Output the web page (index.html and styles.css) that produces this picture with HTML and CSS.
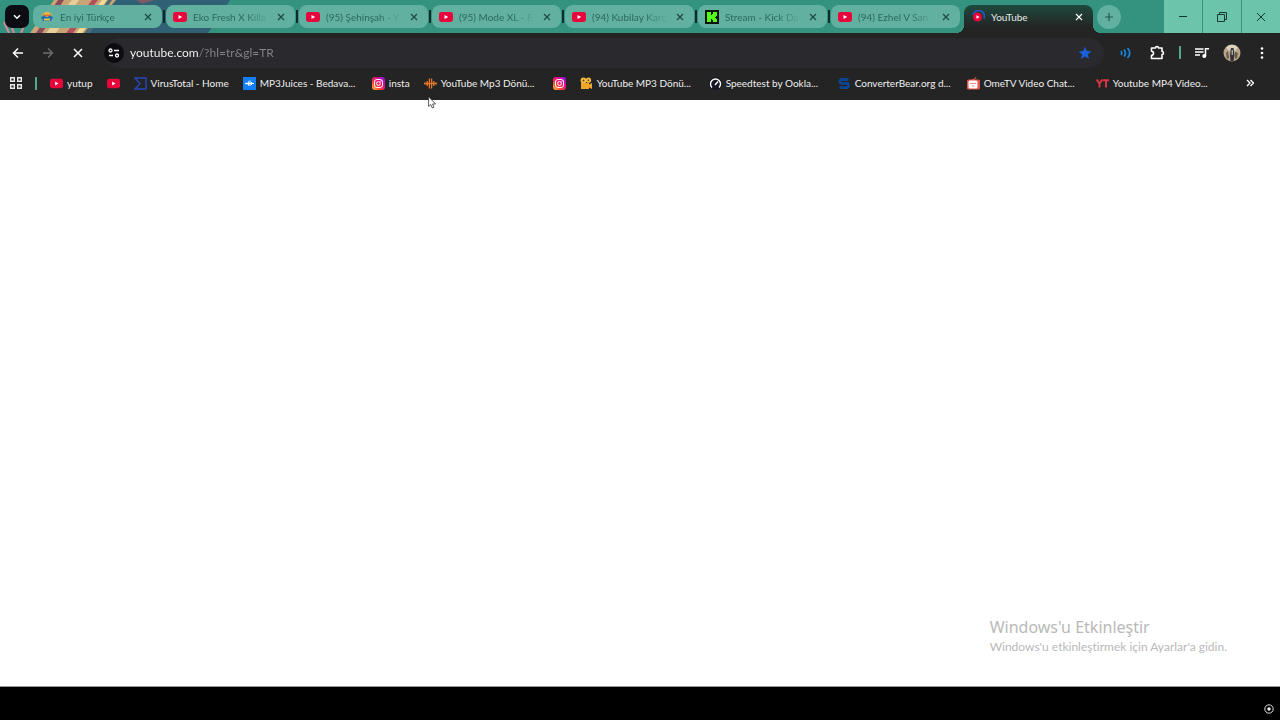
FILE: index.html
```
<!DOCTYPE html>
<html lang="tr">
<head>
    <meta charset="UTF-8">
    <meta name="viewport" content="width=device-width, initial-scale=1.0">
    <title>YouTube</title>
    <link rel="stylesheet" href="styles.css">
</head>
<body>
    <!-- Shared icons -->
    <svg class="sprite" aria-hidden="true">
        <symbol id="yt" viewBox="0 0 14 10">
            <rect width="14" height="10" rx="2.4" fill="#e8053c"/>
            <path d="M5.5 2.9v4.2L9.2 5z" fill="#fff"/>
        </symbol>
        <symbol id="close" viewBox="0 0 8 8">
            <path d="M1 1l6 6M7 1L1 7" fill="none" stroke="currentColor" stroke-width="1.2"/>
        </symbol>
        <symbol id="insta" viewBox="0 0 13 13">
            <rect width="13" height="13" rx="3" fill="url(#insta-fill)"/>
            <rect x="2.5" y="2.5" width="8" height="8" rx="2.4" fill="none" stroke="#fff"/>
            <circle cx="6.5" cy="6.5" r="1.9" fill="none" stroke="#fff"/>
            <circle cx="8.9" cy="4.1" r=".6" fill="#fff"/>
        </symbol>
        <defs>
            <linearGradient id="insta-fill" x1="0" y1="1" x2="1" y2="0">
                <stop offset="0" stop-color="#ffc42e"/>
                <stop offset=".35" stop-color="#fb3c3c"/>
                <stop offset=".65" stop-color="#e6078e"/>
                <stop offset="1" stop-color="#7a1cf0"/>
            </linearGradient>
        </defs>
    </svg>

    <!-- Tab strip -->
    <header class="tab-strip">
        <svg class="theme-art" width="300" height="33" viewBox="0 0 300 33" aria-hidden="true">
            <path d="M80 33L112 0H230L208 33z" fill="#2f6074"/>
            <path d="M30 33L54 0H116L88 33z" fill="#c9a476"/>
            <path d="M46 33L72 0h7L56 33z" fill="#e8cf9a"/>
            <path d="M36 33L58 0h6L42 33z" fill="#8f4a58"/>
            <path d="M66 33L92 0h6L73 33z" fill="#b4505c"/>
            <path d="M84 33L108 0h4L90 33z" fill="#4d6c78"/>
            <path d="M76 33L102 0h5L82 33z" fill="#f0dc96"/>
            <path d="M4 22l5 11M11 26l3 7M24 26l-3 7" stroke="#d68a98" stroke-width="2"/>
            <path d="M136 0h18l-12 4z" fill="#7a5c66"/>
        </svg>
        <button class="tab-search" aria-label="Sekmelerde ara">
            <svg width="8" height="6" viewBox="0 0 8 6"><path d="M1 1.2l3 3 3-3" fill="none" stroke="#fff" stroke-width="1.6"/></svg>
        </button>
        <nav class="tabs" aria-label="Sekmeler">
            <div class="tab">
                <button class="tab-link">
                    <svg class="icon" viewBox="0 0 14 14">
                        <path d="M2 7a5 5 0 0 1 10 0z" fill="#f0b63c"/>
                        <path d="M3 5.2h8" stroke="#d9503c"/>
                        <path d="M1 7l3-1.500 3 1.500 3-1.500L13 7l-2 4H3z" fill="#1f6fb0"/>
                        <path d="M4 8.500h6v2H4z" fill="#e3c14a"/>
                    </svg>
                    <span class="title">En iyi Türkçe</span>
                </button>
                <button class="close" aria-label="Kapat"><svg><use href="#close"/></svg></button>
            </div>
            <div class="tab">
                <button class="tab-link"><svg class="icon"><use href="#yt"/></svg><span class="title">Eko Fresh X Killa</span></button>
                <button class="close" aria-label="Kapat"><svg><use href="#close"/></svg></button>
            </div>
            <div class="tab">
                <button class="tab-link"><svg class="icon"><use href="#yt"/></svg><span class="title">(95) Şehinşah - Y</span></button>
                <button class="close" aria-label="Kapat"><svg><use href="#close"/></svg></button>
            </div>
            <div class="tab">
                <button class="tab-link"><svg class="icon"><use href="#yt"/></svg><span class="title">(95) Mode XL - F</span></button>
                <button class="close" aria-label="Kapat"><svg><use href="#close"/></svg></button>
            </div>
            <div class="tab">
                <button class="tab-link"><svg class="icon"><use href="#yt"/></svg><span class="title">(94) Kubilay Karç</span></button>
                <button class="close" aria-label="Kapat"><svg><use href="#close"/></svg></button>
            </div>
            <div class="tab">
                <button class="tab-link">
                    <svg class="icon" viewBox="0 0 14 14">
                        <rect width="14" height="14" fill="#0a140a"/>
                        <path d="M2 2h4v3h1V4h1V2h4v4h-1v1h-1v1h1v1h1v3H8v-2H7V9H6v3H2z" fill="#53fc18"/>
                    </svg>
                    <span class="title">Stream - Kick Da</span>
                </button>
                <button class="close" aria-label="Kapat"><svg><use href="#close"/></svg></button>
            </div>
            <div class="tab last">
                <button class="tab-link"><svg class="icon"><use href="#yt"/></svg><span class="title">(94) Ezhel V San</span></button>
                <button class="close" aria-label="Kapat"><svg><use href="#close"/></svg></button>
            </div>
            <div class="tab active">
                <button class="tab-link">
                    <svg class="icon" viewBox="0 0 14 14">
                        <path d="M4 1.500a6 6 0 0 1 9 7" fill="none" stroke="#2257c8" stroke-width="1.6"/>
                        <path d="M1.500 5a6 6 0 0 1 4-3.800" fill="none" stroke="#2257c8" stroke-width="1.6"/>
                        <circle cx="6.500" cy="7" r="4.500" fill="#e8053c"/>
                        <path d="M5.500 5.200v3.600L8.500 7z" fill="#fff"/>
                    </svg>
                    <span class="title">YouTube</span>
                </button>
                <button class="close" aria-label="Kapat"><svg><use href="#close"/></svg></button>
            </div>
        </nav>
        <button class="new-tab" aria-label="Yeni sekme">
            <svg width="10" height="10" viewBox="0 0 10 10"><path d="M5 1v8M1 5h8" stroke="#1e5a4c" stroke-width="1.2"/></svg>
        </button>
        <div class="window-controls">
            <button aria-label="Simge durumuna küçült"><svg width="10" height="10" viewBox="0 0 10 10"><path d="M1 4.500h8" stroke="#143a30"/></svg></button>
            <button aria-label="Önceki boyut"><svg width="10" height="10" viewBox="0 0 10 10"><path d="M.5 2.500h7v7h-7zM2.500 2.500v-2h7v7h-2" fill="none" stroke="#143a30"/></svg></button>
            <button aria-label="Pencereyi kapat"><svg width="10" height="10" viewBox="0 0 10 10"><path d="M1 1l8 8M9 1L1 9" stroke="#143a30"/></svg></button>
        </div>
    </header>

    <!-- Toolbar -->
    <div class="toolbar">
        <button class="tool" aria-label="Geri"><svg width="12" height="12" viewBox="0 0 12 12"><path d="M11 6H2M6 1.500L1.500 6 6 10.500" fill="none" stroke="#fff" stroke-width="1.5"/></svg></button>
        <button class="tool" aria-label="İleri" disabled><svg width="12" height="12" viewBox="0 0 12 12"><path d="M1 6h9M6 1.500L10.500 6 6 10.500" fill="none" stroke="#707070" stroke-width="1.3"/></svg></button>
        <button class="tool" aria-label="Durdur"><svg width="10" height="10" viewBox="0 0 10 10"><path d="M1 1l8 8M9 1L1 9" stroke="#fff" stroke-width="1.5"/></svg></button>
        <div class="omnibox">
            <button class="site-info" aria-label="Site bilgileri">
                <svg width="12" height="10" viewBox="0 0 12 10" fill="none" stroke="#fff" stroke-width="1.3"><circle cx="2.500" cy="2.500" r="1.500"/><path d="M6 2.500h5M1 7.500h4"/><circle cx="9" cy="7.500" r="1.500"/></svg>
            </button>
            <input class="address" type="text" aria-label="Adres" value="youtube.com/?hl=tr&amp;gl=TR">
            <button class="star" aria-label="Yer işareti">
                <svg width="14" height="14" viewBox="0 0 14 14"><path d="M7 .8l1.800 4.200 4.600.4-3.500 3 1.100 4.500L7 10.500 3 12.900l1.100-4.500-3.500-3L5.200 5z" fill="#1a5fd8"/></svg>
            </button>
        </div>
        <div class="actions">
            <button class="sound" aria-label="Ses uzantısı"><svg width="12" height="12" viewBox="0 0 12 12" fill="none" stroke="#1787e0" stroke-width="1.700"><path d="M1 4q1.500 2 0 4M4 2.500q3 3.500 0 7M7.500 1q4.500 5 0 10"/></svg></button>
            <button aria-label="Uzantılar"><svg width="15" height="15" viewBox="0 0 15 15"><path d="M1.500 3h4a1.500 1.500 0 0 1 3 0h3.500v3.500a1.500 1.500 0 0 1 0 3V13.500H1.500v-3.300a2 2 0 0 0 0-4z" fill="none" stroke="#fff" stroke-width="1.6" stroke-linejoin="round"/></svg></button>
            <span class="divider"></span>
            <button aria-label="Medya denetimi"><svg width="14" height="12" viewBox="0 0 14 12"><path d="M0 2h8.500M0 5h8.500M0 8h5M10.500 9V1.800H14" fill="none" stroke="#fff" stroke-width="1.5"/><circle cx="9.300" cy="9" r="2" fill="#fff"/></svg></button>
            <button aria-label="Profil">
                <svg width="18" height="18" viewBox="0 0 18 18">
                    <circle cx="9" cy="9" r="8.500" fill="#b8a68a"/>
                    <path d="M3 3.500Q9-2 15 3.500L12 7 9 4 6 7z" fill="#ddd3bd"/>
                    <path d="M8 4h2.500l1 7-1 6H7.500L7 11z" fill="#30343a"/>
                    <path d="M3 9l2-2 1 7-2 1zM12 8l3 1-1 5-2 1z" fill="#6a5a48"/>
                    <path d="M8.700 6h1v5h-1z" fill="#d8dce0"/>
                </svg>
            </button>
            <button class="menu" aria-label="Menü"><svg width="4" height="12" viewBox="0 0 4 12" fill="#fff"><circle cx="2" cy="1.500" r="1.300"/><circle cx="2" cy="6" r="1.300"/><circle cx="2" cy="10.500" r="1.300"/></svg></button>
        </div>
    </div>

    <!-- Bookmarks -->
    <nav class="bookmarks" aria-label="Yer işaretleri">
        <button class="apps" aria-label="Uygulamalar"><svg width="12" height="12" viewBox="0 0 12 12" fill="none" stroke="#e8e8e8" stroke-width="1.4"><path d="M.7.7h3.600v3.600H.7zM7.700.7h3.600v3.600H7.700zM.7 7.700h3.600v3.600H.7zM7.700 7.700h3.600v3.600H7.700z"/></svg></button>
        <span class="divider"></span>
        <a href="#"><svg class="icon"><use href="#yt"/></svg><span>yutup</span></a>
        <a href="#" aria-label="YouTube"><svg class="icon"><use href="#yt"/></svg></a>
        <a href="#"><svg class="icon" viewBox="0 0 13 13"><path d="M1 1h11v11H1l5-5.500z" fill="none" stroke="#2447b8" stroke-width="1.5"/></svg><span>VirusTotal - Home</span></a>
        <a href="#"><svg class="icon" viewBox="0 0 13 13"><rect width="13" height="13" fill="#1580f5"/><path d="M2 6.500h9M4 5.500v2M5.500 4.500v4M7 3.500v5.500M8.500 5v3" stroke="#fff"/></svg><span class="long">MP3Juices - Bedava...</span></a>
        <a href="#"><svg class="icon"><use href="#insta"/></svg><span>insta</span></a>
        <a href="#"><svg class="icon" viewBox="0 0 13 13"><path d="M1 5.500v2M3.200 4v5M5.400 1.500v10M7.600 1.500v10M9.800 4v5M12 5.500v2M0 6.500h13" stroke="#e8792b" stroke-width="1.300"/></svg><span class="long">YouTube Mp3 Dönü...</span></a>
        <a href="#" aria-label="Instagram"><svg class="icon"><use href="#insta"/></svg></a>
        <a href="#"><svg class="icon" viewBox="0 0 13 13"><circle cx="3.500" cy="3.500" r="2.900" fill="#f7bd3c"/><circle cx="8.500" cy="3.200" r="2.600" fill="#f7bd3c"/><path d="M1 6h8v1.500l3-1.500v6l-3-1.500V12H1z" fill="#eda52c"/><circle cx="3.500" cy="3.500" r="1" fill="#6b4310"/><circle cx="8.500" cy="3.200" r=".9" fill="#6b4310"/></svg><span class="long">YouTube MP3 Dönü...</span></a>
        <a href="#"><svg class="icon" viewBox="0 0 13 13"><circle cx="6.500" cy="6.500" r="6.500" fill="#141526"/><path d="M3 10.500a5 5 0 1 1 7 0" fill="none" stroke="#fff" stroke-width="1.400"/><path d="M6 8l3-3.500" stroke="#fff" stroke-width="1.400"/></svg><span class="long">Speedtest by Ookla...</span></a>
        <a href="#"><svg class="icon" viewBox="0 0 13 13"><path d="M10.500 2.500H4Q2 2.500 2 4.300T4 6.300H8.500Q10.500 6.500 10.500 8.500T8.500 10.700H1.500" fill="none" stroke="#0d4591" stroke-width="2.800"/></svg><span class="long">ConverterBear.org d...</span></a>
        <a href="#"><svg class="icon" viewBox="0 0 13 13"><path d="M4.500 3l3-1M7 3l2-3" stroke="#e05546"/><rect y="2.500" width="13" height="10" rx="1.500" fill="#e05546"/><rect x="1.500" y="3.500" width="9" height="8" rx="1.500" fill="#fff"/><path d="M3 6.500h6M5 9h2.500" stroke="#e58a80"/></svg><span class="long">OmeTV Video Chat...</span></a>
        <a href="#"><svg class="icon" viewBox="0 0 13 13"><path d="M.7 2.500L3.500 6.500 6.300 2.500M3.500 6.500v4M7 3.300h6M10 3.300v7.200" fill="none" stroke="#dc3545" stroke-width="1.900"/></svg><span class="long">Youtube MP4 Video...</span></a>
        <button class="more" aria-label="Diğer yer işaretleri"><svg width="8" height="8" viewBox="0 0 8 8"><path d="M1 1l3 3-3 3M4.500 1l3 3-3 3" fill="none" stroke="#fff" stroke-width="1.400"/></svg></button>
    </nav>

    <!-- Page still loading -->
    <main class="page">
        <div class="watermark">
            <p class="watermark-title">Windows'u Etkinleştir</p>
            <p class="watermark-text">Windows'u etkinleştirmek için Ayarlar'a gidin.</p>
        </div>
    </main>

    <footer class="taskbar">
        <svg width="10" height="10" viewBox="0 0 10 10"><circle cx="5" cy="5" r="4.200" fill="none" stroke="#ddd"/><circle cx="5" cy="5" r="1.700" fill="#fff"/></svg>
    </footer>

    <svg class="cursor" width="9" height="13" viewBox="0 0 9 13" aria-hidden="true"><path d="M.6.8v9.700l2.200-2 1.500 3.500 1.700-.8L4.600 8h3z" fill="#fff" stroke="#333" stroke-width=".8"/></svg>
</body>
</html>
```
FILE: styles.css
```
/* Global Styling */
* {
    box-sizing: border-box;
}
body {
    margin: 0;
    min-height: 100vh;
    display: flex;
    flex-direction: column;
    background-color: #fff;
    font-family: Lato, "Noto Sans", sans-serif;
    font-size: 10px;
    line-height: 16px;
    font-variant-ligatures: none;
}
button {
    margin: 0;
    padding: 0;
    border: 0;
    background: none;
    font: inherit;
    color: inherit;
    display: flex;
    align-items: center;
    justify-content: center;
}
svg {
    display: block;
    flex: none;
}
.sprite {
    position: absolute;
    width: 0;
    height: 0;
}
.icon {
    width: 13px;
    height: 13px;
}
.divider {
    width: 2px;
    height: 13px;
    background-color: #52a88e;
}

/* Tab strip */
.tab-strip {
    position: relative;
    display: flex;
    height: 33px;
    padding-left: 5px;
    background-color: #33937f;
}
.theme-art {
    position: absolute;
    left: 0;
    top: 0;
}
.tab-search {
    position: relative;
    flex: none;
    width: 24px;
    height: 23px;
    margin: 5px 4px 0 0;
    border-radius: 7px;
    background-color: #0c0c14;
}
.tabs {
    position: relative;
    display: flex;
    flex: 0 1 1064px;
    min-width: 0;
    padding-top: 5px;
}
.tab {
    position: relative;
    flex: 1 1 0;
    min-width: 0;
    height: 23px;
    margin-right: 4px;
    padding: 0 10px 0 7px;
    display: flex;
    align-items: center;
    border-radius: 8px;
    background-color: #62b09f;
    color: #2b6a5d;
}
.tab::after {
    content: "";
    position: absolute;
    right: -3px;
    top: 5px;
    width: 2px;
    height: 13px;
    background-color: #0e2a2a;
}
.tab.last::after {
    display: none;
}
.tab-link {
    flex: 1;
    min-width: 0;
    justify-content: flex-start;
    gap: 6px;
}
.tab .icon {
    width: 14px;
    height: 14px;
}
.title {
    flex: 1;
    text-align: left;
    white-space: nowrap;
    mask-image: linear-gradient(to right, #000 52px, transparent 76px);
}
.close {
    width: 8px;
    height: 16px;
    margin-left: 8px;
    color: #1d4a40;
}
.close svg {
    width: 8px;
    height: 8px;
}
.tab.active {
    height: 28px;
    padding-bottom: 5px;
    border-radius: 8px 8px 0 0;
    background: linear-gradient(#1e4a3e, #242424 80%);
    color: #e4ebe8;
}
/* curved feet of the active tab */
.tab.active::before,
.tab.active::after {
    content: "";
    position: absolute;
    top: auto;
    bottom: 0;
    width: 8px;
    height: 8px;
}
.tab.active::before {
    left: -8px;
    background: radial-gradient(circle at 0 0, transparent 8px, #242424 8px);
}
.tab.active::after {
    right: -8px;
    background: radial-gradient(circle at 100% 0, transparent 8px, #242424 8px);
}
.tab.active .title {
    mask-image: none;
}
.tab.active .close {
    color: #fff;
}
.new-tab {
    position: relative;
    flex: none;
    width: 24px;
    height: 24px;
    margin-top: 5px;
    border-radius: 50%;
    background-color: #62b09f;
}
.window-controls {
    display: flex;
    gap: 1px;
    margin-left: auto;
}
.window-controls button {
    width: 38px;
    background-color: #6cc4ab;
}

/* Toolbar */
.toolbar {
    display: flex;
    align-items: center;
    height: 39px;
    padding: 0 11px 0 3px;
    background-color: #242424;
}
.tool {
    width: 30px;
    height: 30px;
}
.omnibox {
    flex: 1;
    display: flex;
    align-items: center;
    height: 30px;
    margin-left: 11px;
    padding-right: 12px;
    border-radius: 15px;
    background-color: #29292e;
}
.site-info {
    width: 20px;
    height: 20px;
    border-radius: 50%;
    background-color: #0c0c10;
}
.address {
    flex: 1;
    min-width: 0;
    margin-left: 6px;
    padding: 0;
    border: 0;
    outline: 0;
    font: inherit;
    font-size: 12px;
    /* host name bright, the rest of the address dimmed */
    background: linear-gradient(to right, #fff 69px, #85858a 69px);
    -webkit-background-clip: text;
    background-clip: text;
    color: transparent;
}
.actions {
    display: flex;
    align-items: center;
    gap: 14px;
    margin-left: 12px;
}
.sound {
    width: 20px;
}
.menu {
    width: 14px;
}

/* Bookmarks */
.bookmarks {
    display: flex;
    align-items: center;
    gap: 14px;
    height: 28px;
    padding: 0 26px 6px 10px;
    background-color: #242424;
    color: #f0f0f0;
}
.bookmarks .divider {
    margin: 0 -1px;
}
.bookmarks a {
    display: flex;
    align-items: center;
    gap: 4px;
    color: inherit;
    text-decoration: none;
    white-space: nowrap;
}
.bookmarks .long {
    width: 98px;
}
.more {
    margin-left: auto;
}

/* Page */
.page {
    flex: 1;
    display: flex;
    justify-content: flex-end;
    align-items: flex-end;
    padding: 0 53px 30px;
    border-bottom: 1px solid #999;
}
.watermark {
    color: #b9b9b9;
}
.watermark p {
    margin: 0;
}
.watermark-title {
    font-family: "Noto Sans", sans-serif;
    font-size: 16px;
    line-height: 22px;
}
.watermark-text {
    font-size: 12px;
    line-height: 18px;
}
.taskbar {
    display: flex;
    align-items: center;
    justify-content: flex-end;
    height: 33px;
    padding: 10px 6px 0;
    background-color: #000;
}
.cursor {
    position: absolute;
    left: 428px;
    top: 96px;
}
```
